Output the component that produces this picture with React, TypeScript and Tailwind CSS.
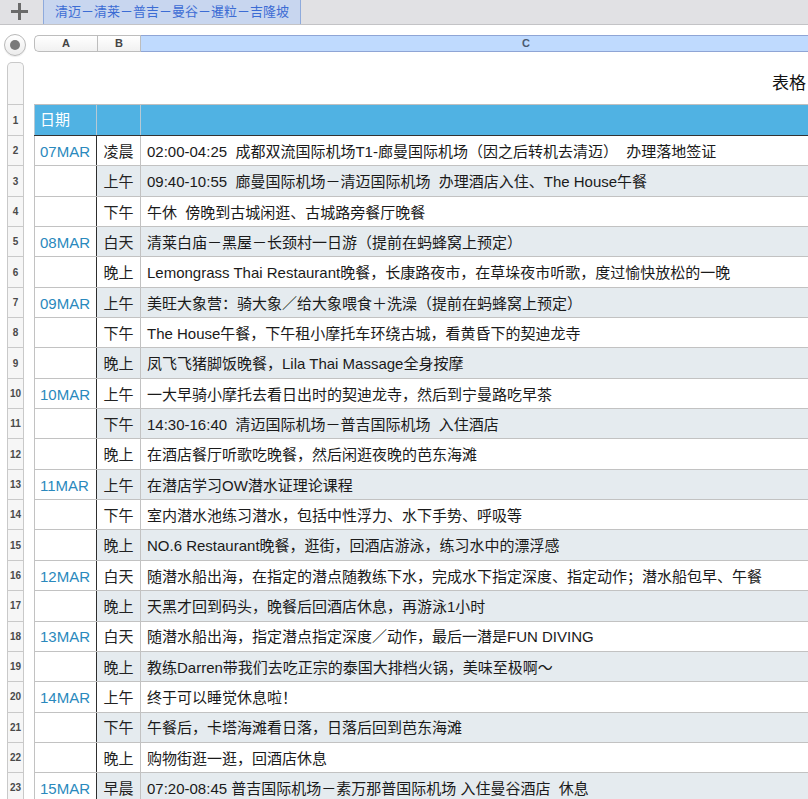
import React from 'react';

type Row = { date?: string; time: string; text: string };

// itinerary rows, numbered from 2 (row 1 is the blue header)
const ROWS: Row[] = [
  { date: '07MAR', time: '凌晨', text: '02:00-04:25  成都双流国际机场T1-廊曼国际机场（因之后转机去清迈）  办理落地签证' },
  { time: '上午', text: '09:40-10:55  廊曼国际机场－清迈国际机场  办理酒店入住、The House午餐' },
  { time: '下午', text: '午休  傍晚到古城闲逛、古城路旁餐厅晚餐' },
  { date: '08MAR', time: '白天', text: '清莱白庙－黑屋－长颈村一日游（提前在蚂蜂窝上预定）' },
  { time: '晚上', text: 'Lemongrass Thai Restaurant晚餐，长康路夜市，在草垛夜市听歌，度过愉快放松的一晚' },
  { date: '09MAR', time: '上午', text: '美旺大象营：骑大象／给大象喂食＋洗澡（提前在蚂蜂窝上预定）' },
  { time: '下午', text: 'The House午餐，下午租小摩托车环绕古城，看黄昏下的契迪龙寺' },
  { time: '晚上', text: '凤飞飞猪脚饭晚餐，Lila Thai Massage全身按摩' },
  { date: '10MAR', time: '上午', text: '一大早骑小摩托去看日出时的契迪龙寺，然后到宁曼路吃早茶' },
  { time: '下午', text: '14:30-16:40  清迈国际机场－普吉国际机场  入住酒店' },
  { time: '晚上', text: '在酒店餐厅听歌吃晚餐，然后闲逛夜晚的芭东海滩' },
  { date: '11MAR', time: '上午', text: '在潜店学习OW潜水证理论课程' },
  { time: '下午', text: '室内潜水池练习潜水，包括中性浮力、水下手势、呼吸等' },
  { time: '晚上', text: 'NO.6 Restaurant晚餐，逛街，回酒店游泳，练习水中的漂浮感' },
  { date: '12MAR', time: '白天', text: '随潜水船出海，在指定的潜点随教练下水，完成水下指定深度、指定动作；潜水船包早、午餐' },
  { time: '晚上', text: '天黑才回到码头，晚餐后回酒店休息，再游泳1小时' },
  { date: '13MAR', time: '白天', text: '随潜水船出海，指定潜点指定深度／动作，最后一潜是FUN DIVING' },
  { time: '晚上', text: '教练Darren带我们去吃正宗的泰国大排档火锅，美味至极啊～' },
  { date: '14MAR', time: '上午', text: '终于可以睡觉休息啦！' },
  { time: '下午', text: '午餐后，卡塔海滩看日落，日落后回到芭东海滩' },
  { time: '晚上', text: '购物街逛一逛，回酒店休息' },
  { date: '15MAR', time: '早晨', text: '07:20-08:45 普吉国际机场－素万那普国际机场 入住曼谷酒店  休息' },
];

const FONT = "font-['Liberation_Sans','Noto_Sans_CJK_SC',sans-serif]";

const RowNumber = ({ n, className = '' }: { n: number; className?: string }) => (
  <div className="w-[34px] shrink-0 flex">
    <div
      className={`ml-[7px] w-[17px] bg-[#f6f6f6] border-x border-b border-[#c9c9c9] flex items-center justify-center text-[10px] font-bold text-[#4a4a4a] ${className}`}
    >
      {n}
    </div>
  </div>
);

const App: React.FC = () => {
  return (
    <div className={`w-[808px] h-[799px] overflow-hidden bg-white ${FONT}`}>
      {/* sheet tabs */}
      <div className="h-[25px] flex bg-[#e1e1e4] border-b border-[#c3c3c6]">
        <div className="w-[43px] flex items-center justify-center">
          <svg width="17" height="17" viewBox="0 0 17 17" className="-ml-[5px] -mt-[1px]">
            <rect x="7" y="0" width="3" height="17" fill="#6b6b6b" />
            <rect x="0" y="7" width="17" height="3" fill="#6b6b6b" />
          </svg>
        </div>
        <div className="w-[258px] bg-[#c8d6ef] border-x border-[#8eaadc] flex items-center justify-center text-[13px] text-[#3c6cd4] whitespace-nowrap">
          清迈－清莱－普吉－曼谷－暹粒－吉隆坡
        </div>
      </div>

      {/* column headers */}
      <div className="flex h-[27px]">
        <div className="w-[34px] shrink-0 flex">
          <div className="ml-[4px] mt-[9px] w-[22px] h-[22px] rounded-full border border-[#b9b9b9] bg-gradient-to-b from-white to-[#ececec] flex items-center justify-center shadow-[0_1px_1px_rgba(0,0,0,0.08)]">
            <div className="w-[10px] h-[10px] rounded-full bg-[#7a7a7a]" />
          </div>
        </div>
        <div className="flex mt-[10px] h-[17px] text-[11px] font-bold text-[#444]">
          <div className="w-[63px] shrink-0 flex items-center justify-center border border-r-0 border-[#bdbdbd] rounded-l-[5px] bg-gradient-to-b from-white to-[#f1f1f1]">
            A
          </div>
          <div className="w-[44px] shrink-0 flex items-center justify-center border border-[#bdbdbd] bg-gradient-to-b from-white to-[#f1f1f1]">
            B
          </div>
          <div className="w-[770px] shrink-0 flex items-center justify-center border-y border-[#8fa5d5] bg-[#bfdafe] text-[#4a5a70]">
            C
          </div>
        </div>
      </div>

      {/* title strip */}
      <div className="flex h-[52px]">
        <div className="w-[34px] shrink-0 flex">
          <div className="ml-[7px] mt-[10px] w-[17px] h-[42px] bg-[#f6f6f6] border-x border-t border-[#c9c9c9] rounded-t-[5px]" />
        </div>
        <div className="flex-1 overflow-hidden pl-[738px] pt-[21px] text-[17px] leading-[22px] text-[#111] whitespace-nowrap">
          表格
        </div>
      </div>

      {/* header row */}
      <div className="flex h-[32px]">
        <RowNumber n={1} className="border-t h-[32px]" />
        <div className="flex border-t border-[#bfbfbf] bg-[#50b2e3] border-b border-b-[#333]">
          <div className="w-[63px] shrink-0 border-l border-r border-[#b7c9d4] pl-[5px] flex items-center text-[15px] text-white">
            日期
          </div>
          <div className="w-[44px] shrink-0 border-r border-[#b7c9d4]" />
          <div className="w-[770px] shrink-0" />
        </div>
      </div>

      {/* body rows */}
      {ROWS.map((r, i) => {
        const n = i + 2;
        const shaded = n % 2 === 1;
        return (
          <div key={n} className="flex h-[30.35px]">
            <RowNumber n={n} className="h-[30.35px]" />
            <div className="flex border-b border-[#c2c2c2]">
              <div className="w-[63px] shrink-0 bg-white border-l border-[#c2c2c2] border-r border-r-[#2e2e2e] pl-[5px] pt-[3px] flex items-center text-[15px] text-[#2a89bd]">
                {r.date}
              </div>
              <div
                className={`w-[44px] shrink-0 border-r border-[#c2c2c2] pt-[3px] flex items-center justify-center text-[15px] text-[#222] ${
                  shaded ? 'bg-[#e5ebef]' : 'bg-white'
                }`}
              >
                {r.time}
              </div>
              <div
                className={`w-[770px] shrink-0 pl-[6px] pt-[3px] flex items-center text-[15px] text-[#1a1a1a] whitespace-pre ${
                  shaded ? 'bg-[#e5ebef]' : 'bg-white'
                }`}
              >
                {r.text}
              </div>
            </div>
          </div>
        );
      })}
    </div>
  );
};

export default App;
